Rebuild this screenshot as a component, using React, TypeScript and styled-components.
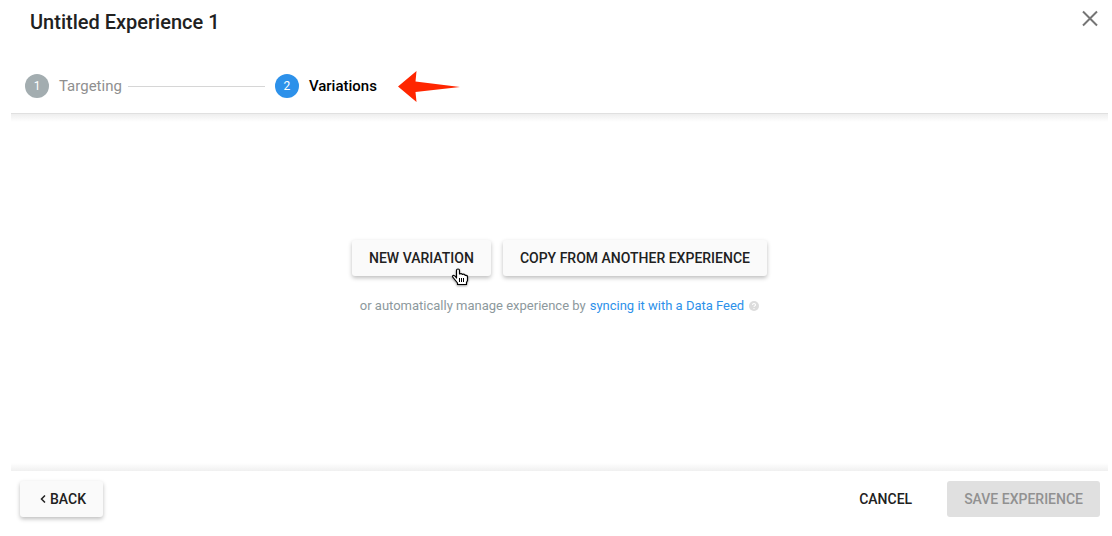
import React from "react";
import styled, { createGlobalStyle } from "styled-components";

const GlobalStyle = createGlobalStyle`
  * { box-sizing: border-box; }
  body {
    margin: 0;
    background: #fff;
    font-family: Roboto, "Liberation Sans", sans-serif;
    color: #212121;
  }
`;

const Page = styled.div`
  display: flex;
  flex-direction: column;
  min-height: 100vh;
  padding: 0 4px 0 11px;
`;

const Header = styled.header`
  border-bottom: 1px solid #e0e0e0;
  padding-bottom: 11px;
`;

const TitleRow = styled.div`
  display: flex;
  align-items: center;
  justify-content: space-between;
  padding: 8px 8px 0 19px;
`;

const Title = styled.h1`
  margin: 0;
  font-size: 20px;
  line-height: 28px;
  font-weight: 500;
`;

const CloseButton = styled.button`
  display: flex;
  border: 0;
  padding: 0;
  margin-bottom: 8px;
  background: none;
  color: #757575;
`;

const Steps = styled.ol`
  display: flex;
  align-items: center;
  list-style: none;
  margin: 34px 0 0;
  padding: 0 14px;
`;

const Step = styled.li<{ $active?: boolean }>`
  display: flex;
  align-items: center;
  gap: 10px;
  font-size: 15px;
  line-height: 24px;
  font-weight: ${(p) => (p.$active ? 500 : 400)};
  color: ${(p) => (p.$active ? "#000" : "#8f8f8f")};
`;

const StepNumber = styled.span<{ $active?: boolean }>`
  width: 24px;
  height: 24px;
  border-radius: 50%;
  background: ${(p) => (p.$active ? "#2d91ea" : "#a3adb0")};
  color: #fff;
  font-size: 12px;
  font-weight: 400;
  text-align: center;
`;

const StepLine = styled.li`
  width: 137px;
  height: 1px;
  margin: 0 10px 0 6px;
  background: #d6d6d6;
`;

const Pointer = styled.li`
  display: flex;
  margin-left: 21px;
`;

const Main = styled.main`
  flex: 1;
  display: flex;
  flex-direction: column;
  align-items: center;
  justify-content: center;
  gap: 20px;
  padding: 24px 0 54px;
  background:
    linear-gradient(to bottom, #eeeeee, #fff) top / 100% 8px no-repeat,
    linear-gradient(to top, #f0f0f0, #fff) bottom / 100% 8px no-repeat;
`;

const Choices = styled.div`
  display: flex;
  gap: 12px;
`;

const Button = styled.button<{ $kind?: "raised" | "flat" }>`
  position: relative;
  display: inline-flex;
  align-items: center;
  justify-content: center;
  height: 36px;
  padding: 0 17px;
  border: 0;
  border-radius: 3px;
  font: 500 14px/20px Roboto, "Liberation Sans", sans-serif;
  white-space: nowrap;
  color: #212121;
  background: ${(p) => (p.$kind === "flat" ? "transparent" : "#fafafa")};
  box-shadow: ${(p) => (p.$kind === "flat" ? "none" : "0 2px 4px rgba(0, 0, 0, 0.26)")};
  &:disabled {
    color: #919191;
    background: #e0e0e0;
    box-shadow: none;
  }
`;

const Cursor = styled.svg`
  position: absolute;
  right: 22px;
  bottom: -10px;
  filter: drop-shadow(0 1px 1px rgba(0, 0, 0, 0.4));
`;

const Hint = styled.p`
  display: flex;
  align-items: center;
  margin: 0;
  font-size: 13px;
  line-height: 20px;
  color: #8d999d;
`;

const FeedLink = styled.a`
  margin: 0 5px 0 4px;
  color: #2d91ea;
  text-decoration: none;
`;

const Footer = styled.footer`
  display: flex;
  align-items: center;
  gap: 18px;
  padding: 10px 8px 19px 9px;
`;

const BackButton = styled(Button)`
  margin-right: auto;
  gap: 4px;
  padding-left: 20px;
`;

export default function App() {
  return (
    <>
      <GlobalStyle />
      <Page>
        <Header>
          <TitleRow>
            <Title>Untitled Experience 1</Title>
            <CloseButton type="button" aria-label="Close">
              <svg width="20" height="20" viewBox="0 0 20 20" fill="none" stroke="currentColor" strokeWidth="2">
                <path d="M3 3.500L17 17.500M17 3.500L3 17.500" />
              </svg>
            </CloseButton>
          </TitleRow>
          <Steps>
            <Step>
              <StepNumber>1</StepNumber>
              Targeting
            </Step>
            <StepLine aria-hidden="true" />
            <Step $active aria-current="step">
              <StepNumber $active>2</StepNumber>
              Variations
            </Step>
            <Pointer aria-hidden="true">
              <svg width="62" height="32" viewBox="0 0 62 32">
                <path d="M0 16.500L18.500 1L17.500 11.500L62 17L17.500 22L18.500 32Z" fill="#ff2600" />
              </svg>
            </Pointer>
          </Steps>
        </Header>

        <Main>
          <Choices>
            <Button type="button">
              NEW VARIATION
              <Cursor width="17" height="18" viewBox="0 0 17 18" aria-hidden="true">
                <path
                  d="M4.500 10V2.500Q4.500 1 6 1T7.500 2.500V6Q9.500 5 10.500 6.500Q12.500 5.500 13.200 7.500Q15.500 7 15.500 9V12.500L14.500 14.500V16.500H5.500V15L3.500 12.500L.7 9Q.3 7 2 7.500Q3.500 8 4.500 10Z"
                  fill="#fff"
                  stroke="#000"
                  strokeWidth="1.200"
                  strokeLinejoin="round"
                />
                <path d="M7.500 10V14M9.500 10V14M11.500 10V14" stroke="#000" />
              </Cursor>
            </Button>
            <Button type="button">COPY FROM ANOTHER EXPERIENCE</Button>
          </Choices>
          <Hint>
            or automatically manage experience by
            <FeedLink href="#data-feed">syncing it with a Data Feed</FeedLink>
            <svg width="10" height="10" viewBox="0 0 10 10" role="img" aria-label="Help">
              <circle cx="5" cy="5" r="5" fill="#dcdcdc" />
              <path d="M3.500 4C3.500 2 6.500 2 6.500 3.900C6.500 4.900 5 4.900 5 6" fill="none" stroke="#fff" strokeWidth="1.100" />
              <circle cx="5" cy="7.600" r=".7" fill="#fff" />
            </svg>
          </Hint>
        </Main>

        <Footer>
          <BackButton type="button">
            <svg width="6" height="8" viewBox="0 0 6 8" fill="none" stroke="currentColor" strokeWidth="1.500" aria-hidden="true">
              <path d="M5 .5L1.500 4L5 7.500" />
            </svg>
            BACK
          </BackButton>
          <Button type="button" $kind="flat">CANCEL</Button>
          <Button type="button" disabled>SAVE EXPERIENCE</Button>
        </Footer>
      </Page>
    </>
  );
}
